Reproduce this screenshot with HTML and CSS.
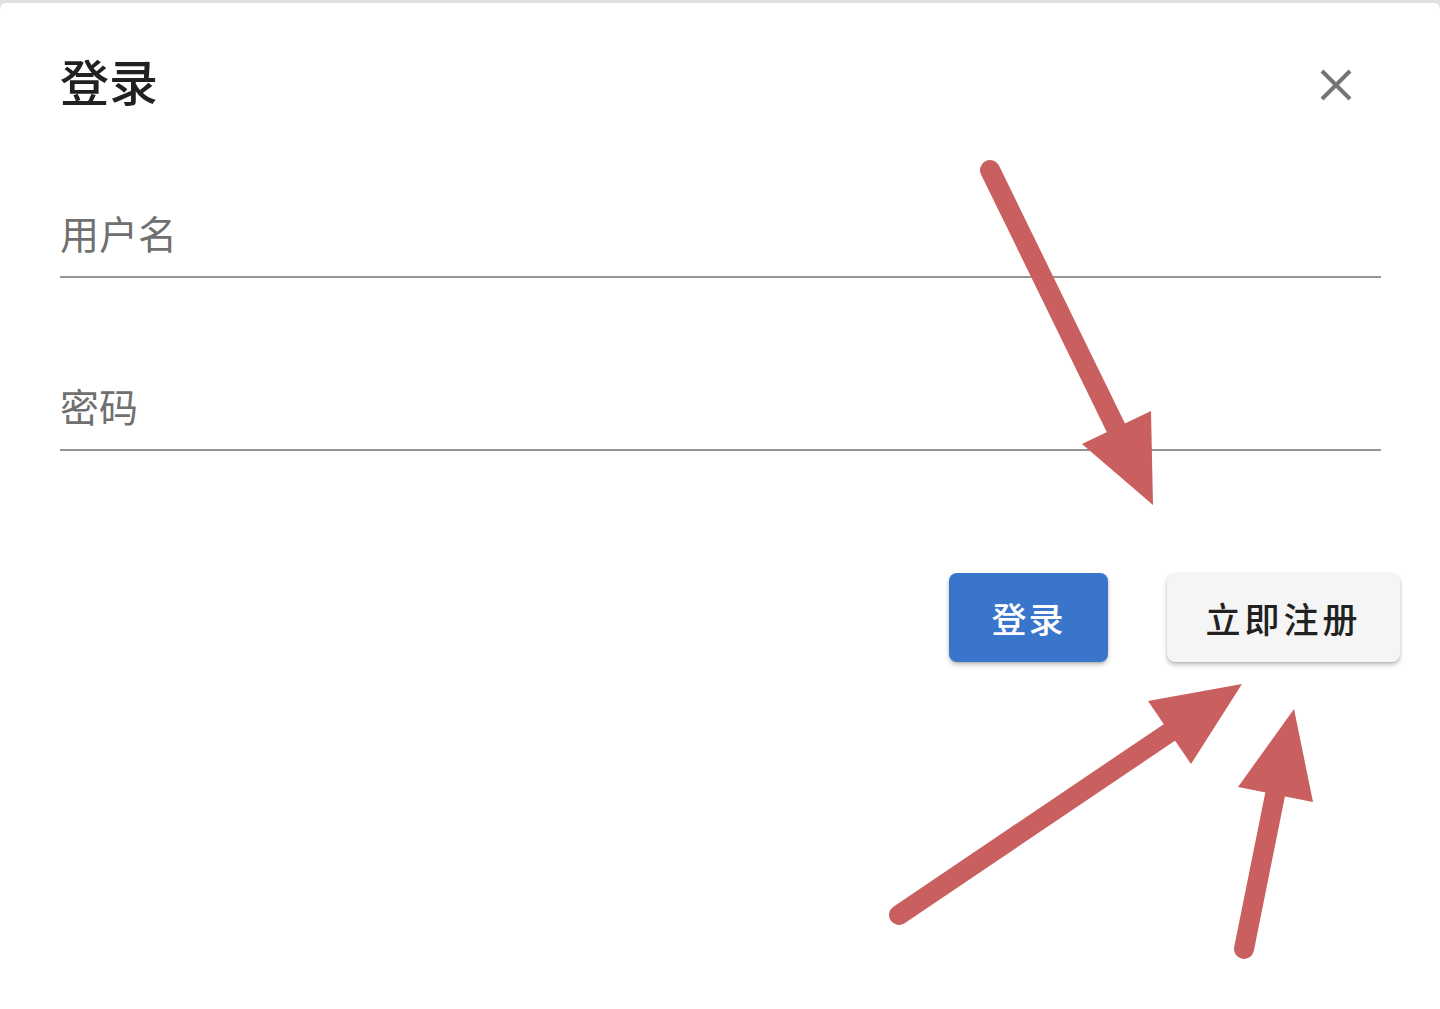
FILE: index.html
```html
<!DOCTYPE html>
<html lang="zh-CN">

<head>
  <meta charset="UTF-8" />
  <meta name="viewport" content="width=device-width, initial-scale=1.0" />
  <title>登录</title>
  <link rel="stylesheet" href="styles.css">
</head>

<body>
  <div class="dialog">
    <div class="dialog-header">
      <h2 class="dialog-title">登录</h2>
      <button class="close-btn" aria-label="关闭">
        <svg viewBox="0 0 32 32" width="32" height="32">
          <path d="M2 2L30 30M30 2L2 30" stroke="#757575" stroke-width="4" fill="none"></path>
        </svg>
      </button>
    </div>

    <div class="field">
      <span class="field-label">用户名</span>
    </div>
    <div class="field field-password">
      <span class="field-label">密码</span>
    </div>

    <div class="actions">
      <button class="btn btn-primary">登录</button>
      <button class="btn btn-plain">立即注册</button>
    </div>
  </div>

  <!-- annotation arrows -->
  <svg class="annotations" viewBox="0 0 1440 1009" width="1440" height="1009">
    <g fill="#c95f5f" stroke="#c95f5f">
      <line x1="990" y1="170" x2="1116" y2="428" stroke-width="20" stroke-linecap="round"></line>
      <polygon points="1082,444 1151,411 1153,505" stroke="none"></polygon>

      <line x1="899" y1="915" x2="1170" y2="732" stroke-width="20" stroke-linecap="round"></line>
      <polygon points="1148,701 1191,764 1242,684" stroke="none"></polygon>

      <line x1="1244" y1="949" x2="1275" y2="795" stroke-width="20" stroke-linecap="round"></line>
      <polygon points="1238,787 1313,802 1294,709" stroke="none"></polygon>
    </g>
  </svg>
</body>

</html>
```

FILE: styles.css
```css
/* Page */
body {
  margin: 0;
  padding: 3px 0 0;
  background: #e0e0e0;
  font-family: Roboto, "Noto Sans CJK SC", sans-serif;
  height: 1006px;
  overflow: hidden;
  position: relative;
}

/* Dialog card */
.dialog {
  background: #ffffff;
  border-radius: 6px 6px 0 0;
  height: 100%;
  box-sizing: border-box;
  padding: 50px 59px 0 60px;
}

.dialog-header {
  display: flex;
  align-items: center;
  justify-content: space-between;
}

.dialog-title {
  margin: 0;
  font-size: 49px;
  line-height: 48px;
  font-weight: 500;
  color: #212121;
}

.close-btn {
  width: 64px;
  height: 64px;
  margin-right: 13px;
  padding: 0;
  border: none;
  background: none;
  display: flex;
  align-items: center;
  justify-content: center;
  cursor: pointer;
}

/* Text fields */
.field {
  margin-top: 100px;
  padding-bottom: 21px;
  border-bottom: 2px solid #959595;
}

.field-password {
  margin-top: 112px;
}

.field-label {
  display: block;
  font-size: 39px;
  line-height: 38px;
  color: #707070;
}

/* Buttons */
.actions {
  display: flex;
  justify-content: flex-end;
  gap: 59px;
  margin-top: 122px;
  margin-right: -19px;
}

.btn {
  height: 89px;
  border: none;
  border-radius: 8px;
  font-family: Roboto, "Noto Sans CJK SC", sans-serif;
  font-size: 35px;
  font-weight: 500;
  letter-spacing: 2px;
  cursor: pointer;
  box-shadow: 0 3px 5px rgba(0, 0, 0, 0.22), 0 1px 2px rgba(0, 0, 0, 0.12);
}

.btn-primary {
  width: 159px;
  background: #3a75cc;
  color: #ffffff;
}

.btn-plain {
  width: 233px;
  background: #f5f5f5;
  color: #212121;
  letter-spacing: 4px;
}

/* Arrows drawn on top */
.annotations {
  position: absolute;
  top: 0;
  left: 0;
  pointer-events: none;
}
```
